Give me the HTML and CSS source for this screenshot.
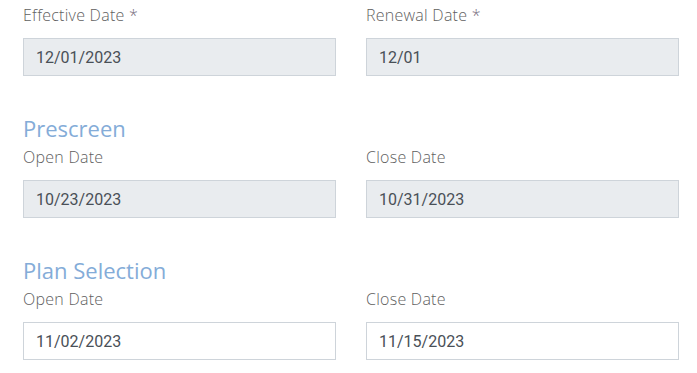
FILE: index.html
```html
<!DOCTYPE html>
<html lang="en">
<head>
<meta charset="utf-8">
<title>Dates</title>
<link rel="stylesheet" href="styles.css">
</head>
<body>
<div class="page">
  <div class="row">
    <div class="field">
      <label class="label">Effective Date <span class="req">*</span></label>
      <input class="input input-disabled" type="text" value="12/01/2023" readonly>
    </div>
    <div class="field">
      <label class="label">Renewal Date <span class="req">*</span></label>
      <input class="input input-disabled" type="text" value="12/01" readonly>
    </div>
  </div>

  <section class="section">
    <h2 class="section-title">Prescreen</h2>
    <div class="row">
      <div class="field">
        <label class="label">Open Date</label>
        <input class="input input-disabled" type="text" value="10/23/2023" readonly>
      </div>
      <div class="field">
        <label class="label">Close Date</label>
        <input class="input input-disabled" type="text" value="10/31/2023" readonly>
      </div>
    </div>
  </section>

  <section class="section">
    <h2 class="section-title">Plan Selection</h2>
    <div class="row">
      <div class="field">
        <label class="label">Open Date</label>
        <input class="input" type="text" value="11/02/2023">
      </div>
      <div class="field">
        <label class="label">Close Date</label>
        <input class="input" type="text" value="11/15/2023">
      </div>
    </div>
  </section>
</div>
</body>
</html>
```
FILE: styles.css
```css
* {
  box-sizing: border-box;
}

html, body {
  margin: 0;
  padding: 0;
  background: #ffffff;
}

body {
  font-family: "Open Sans", "Liberation Sans", sans-serif;
  color: #6b6b6b;
}

.page {
  padding: 3px 0 0 23px;
}

.row {
  display: grid;
  grid-template-columns: 313px 313px;
  column-gap: 30px;
}

.field {
  display: flex;
  flex-direction: column;
}

.label {
  display: block;
  font-size: 16px;
  font-weight: 300;
  line-height: 24px;
  letter-spacing: 0.25px;
  color: #5f5f5f;
  margin: 0 0 11px 0;
}

.req {
  color: #7a6f80;
}

.input {
  display: block;
  width: 100%;
  height: 38px;
  padding: 6px 12px;
  margin: 0;
  font-family: Roboto, "Liberation Sans", sans-serif;
  font-size: 16px;
  line-height: 24px;
  color: #495057;
  background: #ffffff;
  border: 1px solid #ced4da;
  border-radius: 0;
  outline: none;
}

.input-disabled {
  background: #e9ecef;
}

.section {
  margin-top: 39px;
}

.section-title {
  margin: 0 0 4px 0;
  font-size: 22px;
  line-height: 26px;
  font-weight: 400;
  color: #84acd8;
}
```
